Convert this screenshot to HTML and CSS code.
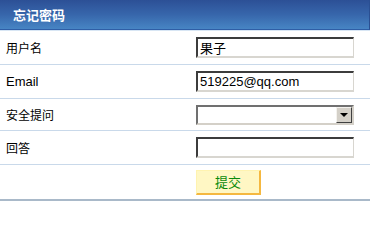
FILE: index.html
```html
<!DOCTYPE html>
<html lang="zh-CN">
<head>
<meta charset="utf-8">
<title>忘记密码</title>
<link rel="stylesheet" href="styles.css">
</head>
<body>
<div class="panel">
  <div class="header">忘记密码</div>
  <div class="row r1">
    <div class="label">用户名</div>
    <div class="field"><div class="input">果子</div></div>
  </div>
  <div class="row r2">
    <div class="label">Email</div>
    <div class="field"><div class="input latin">519225@qq.com</div></div>
  </div>
  <div class="row r3">
    <div class="label">安全提问</div>
    <div class="field">
      <div class="select"><span class="select-value"></span><span class="arrow"><span class="tri"></span></span></div>
    </div>
  </div>
  <div class="row r4">
    <div class="label">回答</div>
    <div class="field"><div class="input"></div></div>
  </div>
  <div class="row r5">
    <div class="label"></div>
    <div class="field"><button class="submit">提交</button></div>
  </div>
</div>
</body>
</html>
```

FILE: styles.css
```css
html, body {
  margin: 0;
  padding: 0;
  background: #ffffff;
}
body {
  font-family: "Liberation Sans", "Noto Sans CJK SC", sans-serif;
  font-size: 12px;
  color: #000000;
}
.panel {
  width: 370px;
  display: flex;
  flex-direction: column;
}
.header {
  height: 30px;
  box-sizing: border-box;
  padding-left: 13px;
  display: flex;
  align-items: center;
  color: #ffffff;
  font-weight: bold;
  font-size: 13px;
  font-family: "Noto Sans CJK SC", sans-serif;
  background: linear-gradient(to bottom, #2c5096 0%, #3766ab 50%, #4785c4 100%);
  border-bottom: 1px solid #2f5ea6;
  border-right: 1px solid #2a4f92;
  box-shadow: 0 1px 0 #d8e6f4;
  margin-bottom: 1px;
}
.row {
  display: grid;
  grid-template-columns: 196px 1fr;
  align-items: center;
  border-bottom: 1px solid #c9d9ea;
}
.r1 { height: 33px; }
.r2 { height: 33px; }
.r3 { height: 31px; }
.r4 { height: 33px; }
.r5 { height: 34px; border-bottom: 2px solid #a9b9c9; }
.label {
  padding-left: 6px;
  font-family: "Liberation Sans", "Noto Sans CJK SC", sans-serif;
  font-size: 12px;
}
.r2 .label { font-size: 13px; }
.field {
  display: flex;
  align-items: center;
}
.input {
  width: 158px;
  height: 21px;
  box-sizing: border-box;
  border-style: solid;
  border-width: 2px 1px 2px 2px;
  border-color: #3c3c3c #d8d6d0 #d8d6d0 #3c3c3c;
  background: #ffffff;
  padding: 1px 0 0 2px;
  font-family: "Noto Sans CJK SC", sans-serif;
  font-size: 13px;
  line-height: 16px;
}
.input.latin {
  font-family: "Liberation Sans", sans-serif;
  font-size: 13px;
}
.select {
  width: 158px;
  height: 20px;
  box-sizing: border-box;
  border-style: solid;
  border-width: 2px;
  border-color: #707070 #d4d0c8 #d4d0c8 #707070;
  background: #ffffff;
  display: flex;
}
.select-value { flex: 1; }
.arrow {
  width: 16px;
  box-sizing: border-box;
  background: #d4d0c8;
  border-style: solid;
  border-width: 1px;
  border-color: #f4f2ee #404040 #404040 #f4f2ee;
  display: flex;
  align-items: center;
  justify-content: center;
}
.tri {
  width: 0;
  height: 0;
  border-left: 4px solid transparent;
  border-right: 4px solid transparent;
  border-top: 4px solid #000000;
}
.submit {
  width: 65px;
  height: 25px;
  box-sizing: border-box;
  margin: 0;
  padding: 0;
  background: #fff7c4;
  border-style: solid;
  border-width: 1px 2px 2px 1px;
  border-color: #fff3b0 #f5b840 #f5b840 #fff3b0;
  color: #0a8a0a;
  font-family: "Noto Sans CJK SC", sans-serif;
  font-size: 13px;
  cursor: pointer;
}
```
